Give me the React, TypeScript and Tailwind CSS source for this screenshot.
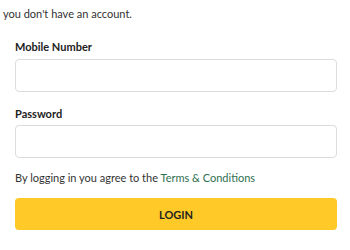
import React from "react";

export default function App() {
  return (
    <div
      className="w-[350px] h-[250px] bg-white overflow-hidden text-[#333333]"
      style={{ fontFamily: "Lato, 'Open Sans', sans-serif" }}
    >
      <div className="pl-[3px] pt-[7px] text-[11px] leading-[13px] text-[#333333]">
        you don&apos;t have an account.
      </div>
      <div className="pl-[15px] pr-[13px] pt-[20px]">
        <label className="block text-[11px] leading-[13px] font-bold text-[#222222]">
          Mobile Number
        </label>
        <input
          type="tel"
          className="mt-[6px] block w-full h-[33px] rounded-[4px] border border-[#dcdcdc] bg-white outline-none"
        />
        <label className="block mt-[15px] text-[11px] leading-[13px] font-bold text-[#222222]">
          Password
        </label>
        <input
          type="password"
          className="mt-[5px] block w-full h-[33px] rounded-[4px] border border-[#dcdcdc] bg-white outline-none"
        />
        <p className="mt-[13px] text-[11px] leading-[13px] text-[#333333]">
          By logging in you agree to the{" "}
          <a className="text-[#2f6e4f]">Terms &amp; Conditions</a>
        </p>
        <button className="mt-[14px] block w-full h-[32px] rounded-[4px] bg-[#ffca28] text-[11px] leading-[13px] font-bold text-[#222222]">
          LOGIN
        </button>
      </div>
    </div>
  );
}
